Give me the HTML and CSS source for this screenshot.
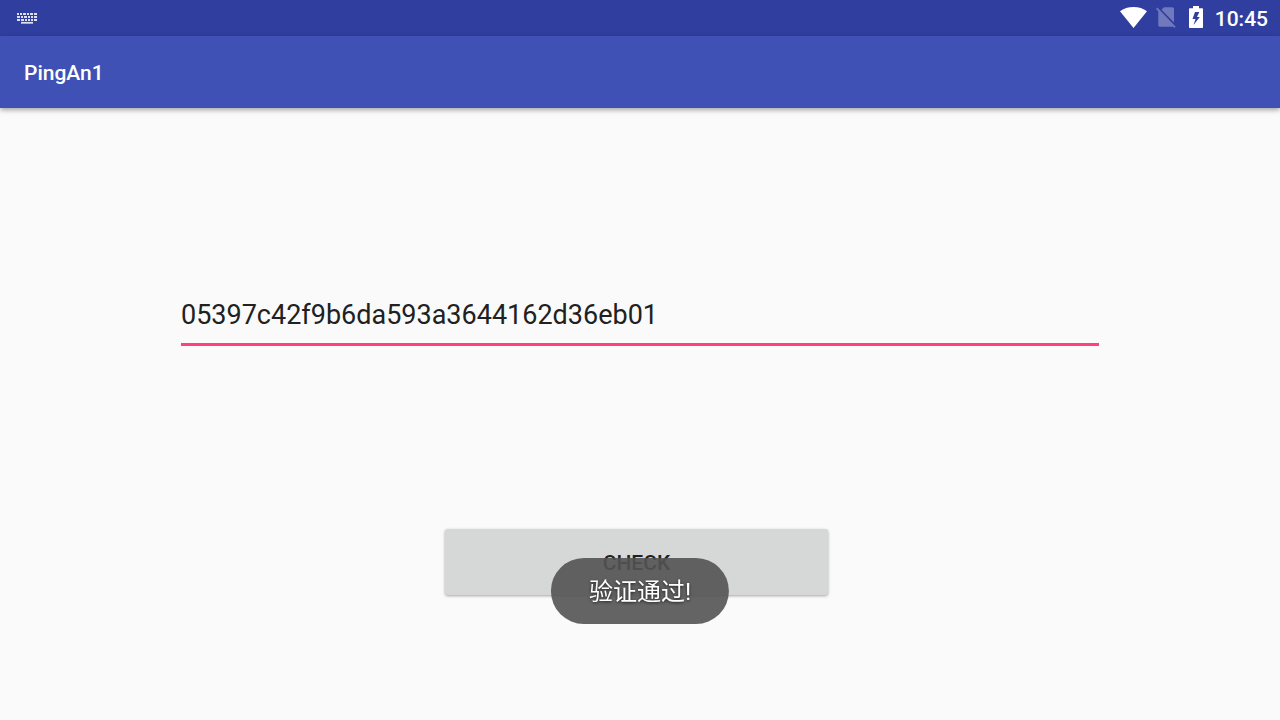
FILE: index.html
```html
<!DOCTYPE html>
<html lang="zh-CN">
<head>
    <meta charset="UTF-8">
    <meta name="viewport" content="width=device-width, initial-scale=1.0">
    <title>PingAn1</title>
    <link rel="stylesheet" href="styles.css">
</head>
<body>
    <div class="status-bar">
        <svg class="icon-keyboard" width="20" height="11" viewBox="0 0 20 11" fill="none" stroke="#dcdff1" stroke-width="1.800">
            <path d="M0 1h2M3 1h2M6 1h3M10 1h2M13 1h3M17 1h3"/>
            <path d="M0 4h3M4 4h2M7 4h3M11 4h2M14 4h2M17 4h3"/>
            <path d="M0 7h3M4 7h3M8 7h2M11 7h2M14 7h2M17 7h3"/>
            <path d="M4 9.800h12"/>
        </svg>
        <div class="status-icons">
            <svg width="27" height="21" viewBox="0 0 27 21">
                <path fill="#fff" d="M13.5 21L0 4.3C3.6 1.5 8.3 0 13.5 0S23.4 1.5 27 4.3z"/>
            </svg>
            <svg class="icon-sim" width="20" height="21" viewBox="0 0 20 21" fill="#fff">
                <path d="M5.5 2.7L8 .3h8.2c1 0 1.800.8 1.8 1.800v13.300z"/>
                <path d="M1.300.6L0 1.900l2.300 2.400v13.700c0 1 .8 1.800 1.800 1.800h12c.3 0 .6-.1.900-.2l1.400 1.400 1.300-1.300z"/>
            </svg>
            <svg class="icon-battery" width="14" height="22" viewBox="0 0 14 22">
                <path fill="#fff" fill-rule="evenodd" d="M4 0h6v2.200h3C13.600 2.200 14 2.600 14 3.200v17.800c0 .6-.4 1-1 1H1c-.6 0-1-.4-1-1V3.200c0-.6.4-1 1-1h3zM6 6L3.500 13h3L4.500 19 10.800 11H8L10.300 6z"/>
            </svg>
            <span class="clock">10:45</span>
        </div>
    </div>
    <header class="app-bar">
        <h1>PingAn1</h1>
    </header>
    <form class="check-form" onsubmit="return false">
        <input class="code" type="text" aria-label="code" value="05397c42f9b6da593a3644162d36eb01" spellcheck="false" autocomplete="off">
        <button class="check" type="submit">CHECK</button>
    </form>
    <div class="toast" role="status">验证通过!</div>
</body>
</html>
```

FILE: styles.css
```css
* {
    box-sizing: border-box;
}
body {
    margin: 0;
    min-height: 100vh;
    background: #fafafa;
    color: #212121;
    font-family: Roboto, "Noto Sans CJK SC", sans-serif;
}
svg {
    display: block;
}
.status-bar {
    display: flex;
    justify-content: space-between;
    align-items: center;
    height: 36px;
    padding: 0 12px 0 17px;
    background: #303f9f;
}
.status-icons {
    display: flex;
    align-items: center;
}
.status-icons svg {
    margin-bottom: 2px;
}
.status-icons .icon-sim {
    margin-left: 9px;
    margin-right: 13px;
    opacity: .3;
}
.clock {
    margin-left: 12px;
    padding-top: 2px;
    color: #fff;
    font-size: 21px;
    font-weight: 500;
    line-height: 34px;
}
.app-bar {
    display: flex;
    align-items: center;
    height: 72px;
    padding: 2px 24px 0;
    background: #3f51b5;
    box-shadow: 0 2px 5px rgba(0, 0, 0, .35);
}
.app-bar h1 {
    margin: 0;
    color: #fff;
    font-size: 21px;
    font-weight: 500;
}
.check-form {
    display: flex;
    flex-direction: column;
    align-items: flex-start;
    max-width: 918px;
    margin: 0 auto;
    padding-top: 178px;
}
.code {
    width: 100%;
    height: 60px;
    padding: 0;
    border: 0;
    border-bottom: 3px solid #ff4081;
    outline: 0;
    background: transparent;
    color: #212121;
    font-family: inherit;
    font-size: 27px;
}
.check {
    width: 383px;
    height: 66px;
    margin: 183px 0 0 264px;
    padding: 2px 0 0;
    border: 0;
    border-radius: 3px;
    background: #d6d7d7;
    box-shadow: 0 1px 3px rgba(0, 0, 0, .35);
    color: #212121;
    font-family: inherit;
    font-size: 21px;
    font-weight: 500;
}
/* 底部提示 */
.toast {
    position: fixed;
    bottom: 96px;
    left: 50%;
    padding: 2px 38px 0;
    border-radius: 33px;
    background: rgba(83, 83, 83, .9);
    color: #fff;
    font-size: 24px;
    line-height: 64px;
    white-space: nowrap;
    text-shadow: 0 1px 3px rgba(0, 0, 0, .7);
    transform: translateX(-50%);
}
```
